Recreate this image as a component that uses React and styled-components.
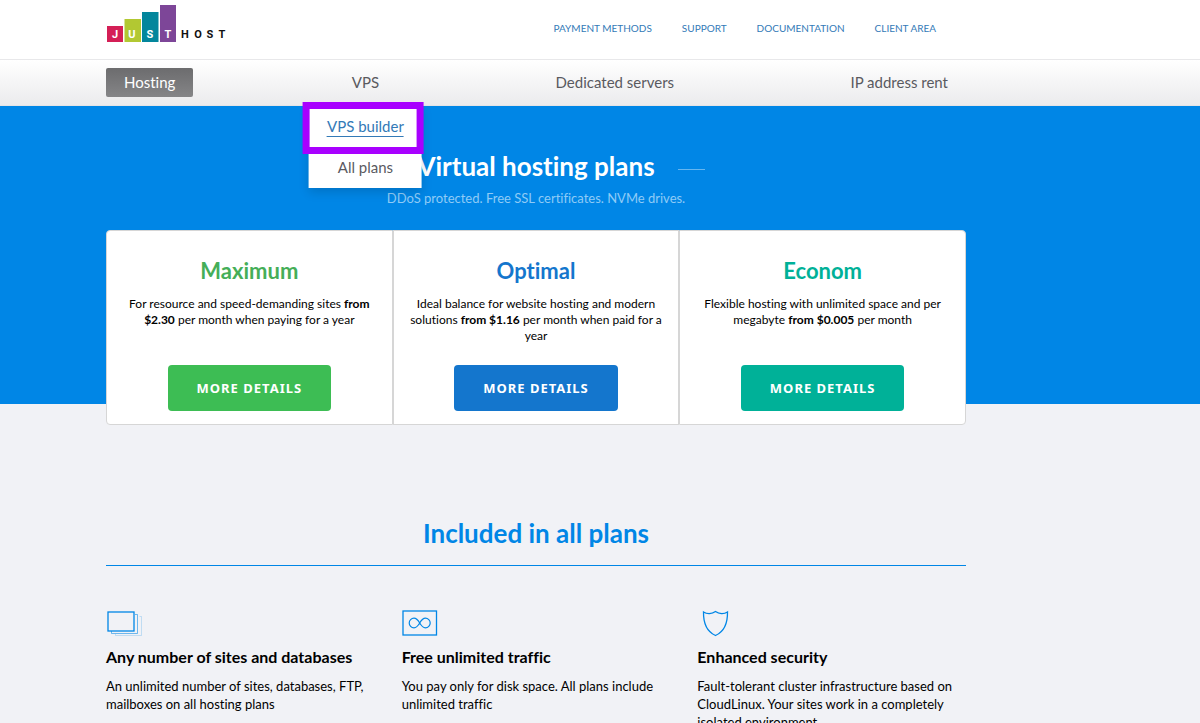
import React from "react";
import styled, { createGlobalStyle } from "styled-components";

const GlobalStyle = createGlobalStyle`
  *, *::before, *::after { box-sizing: border-box; }
  html { overflow-x: hidden; scrollbar-width: none; }
  body {
    margin: 0;
    background: #f1f2f6;
    color: #000;
    font-family: Lato, "Liberation Sans", sans-serif;
    font-size: 13px;
    line-height: 16px;
    font-variant-ligatures: none;
  }
  h1, h2, h3, p, ul { margin: 0; padding: 0; }
  ul { list-style: none; }
  a { text-decoration: none; }
`;

const Container = styled.div`
  max-width: 966px;
  padding-left: 106px;
`;

const Header = styled.header`
  background: #fff;
  border-bottom: 1px solid #e8e8ea;
`;

const HeaderRow = styled(Container)`
  display: flex;
  justify-content: space-between;
  align-items: flex-start;
  height: 59px;
  padding-right: 30px;
`;

const LogoLink = styled.a`
  display: block;
  padding-top: 4px;
`;

const LogoSvg = styled.svg`
  display: block;
  font-family: Roboto, sans-serif;
  font-size: 11px;
  font-weight: 700;
  text-anchor: middle;
`;

const TopLinks = styled.nav`
  display: flex;
  gap: 30px;
  padding-top: 20px;
`;

const TopLink = styled.a`
  color: #337ab7;
  font-size: 10px;
  text-transform: uppercase;
`;

const MainNav = styled.nav`
  background: linear-gradient(#fff, #ebebed);
  border-bottom: 1px solid #e4e4e6;
`;

const NavList = styled.ul`
  display: flex;
  justify-content: space-between;
  padding: 8px 0;
`;

const NavItem = styled.li`
  position: relative;
`;

const NavLink = styled.a`
  display: block;
  padding: 0 18px;
  border-radius: 2px;
  color: ${(p) => (p.$active ? "#fff" : "#5a5a5f")};
  background: ${(p) => (p.$active ? "linear-gradient(#6c6c6e, #858587)" : "none")};
  font-size: 15px;
  line-height: 29px;
`;

const Menu = styled.ul`
  position: absolute;
  z-index: 2;
  top: 38px;
  left: 50%;
  transform: translateX(-50%);
  background: #fff;
  box-shadow: 0 4px 10px rgba(0, 0, 0, 0.15);
  text-align: center;
  white-space: nowrap;
`;

const MenuItem = styled.li`
  position: relative;
  padding: 10px 18px;
`;

const MenuLink = styled.a`
  display: inline-block;
  color: ${(p) => (p.$hovered ? "#337ab7" : "#5a5a5f")};
  border-bottom: 1px solid ${(p) => (p.$hovered ? "#337ab7" : "transparent")};
  font-size: 15px;
  line-height: 20px;
`;

const Highlight = styled.span`
  position: absolute;
  inset: -4px -2px -7px -6px;
  border: 7px solid #a800ff;
  pointer-events: none;
`;

const Hero = styled.section`
  background: linear-gradient(#0086e6, #0086e6) top / 100% 298px no-repeat;
  text-align: center;
`;

const HeroTitle = styled.h1`
  display: flex;
  align-items: center;
  justify-content: center;
  gap: 23px;
  padding-top: 44px;
  color: #fff;
  font-size: 26px;
  line-height: 32px;

  &::before, &::after {
    content: "";
    width: 27px;
    height: 1px;
    margin-top: 6px;
    background: #66b6f0;
  }
`;

const HeroText = styled.p`
  padding: 8px 0 24px;
  color: #8fcbf6;
  font-size: 13px;
`;

const Plans = styled.div`
  display: grid;
  grid-template-columns: repeat(3, 1fr);
`;

const Plan = styled.article`
  display: flex;
  flex-direction: column;
  align-items: center;
  padding: 27px 16px 13px;
  background: #fff;
  border: 1px solid #d6d6d6;

  &:first-child { border-radius: 4px 0 0 4px; }
  &:last-child { border-radius: 0 4px 4px 0; }
`;

const PlanTitle = styled.h2`
  color: ${(p) => p.$color};
  font-size: 22px;
  line-height: 26px;
`;

const PlanText = styled.p`
  min-height: 48px;
  margin: 12px 0 21px;
  font-size: 12px;
`;

const PlanButton = styled.button`
  padding: 0 29px;
  border: 0;
  border-radius: 4px;
  background: ${(p) => p.$color};
  color: #fff;
  font-family: "Noto Sans", sans-serif;
  font-size: 13px;
  font-weight: 700;
  line-height: 46px;
  letter-spacing: 1px;
  text-transform: uppercase;
  cursor: pointer;
`;

const SectionTitle = styled.h2`
  margin-top: 92px;
  padding-bottom: 16px;
  border-bottom: 1px solid #0086e6;
  color: #0086e6;
  font-size: 26px;
  line-height: 32px;
  text-align: center;
`;

const Features = styled.div`
  display: grid;
  grid-template-columns: repeat(3, 1fr);
  gap: 27px;
  padding: 43px 0 40px;
`;

const Feature = styled.article`
  svg { display: block; }
`;

const FeatureTitle = styled.h3`
  margin: 10px 0;
  font-size: 16px;
  line-height: 20px;
`;

const FeatureText = styled.p`
  font-size: 13px;
  line-height: 18px;
`;

const Logo = () => (
  <LogoSvg width="122" height="40" viewBox="0 0 122 40" role="img" aria-label="Just Host">
    <rect x="1" y="22" width="16" height="16" fill="#d41f56" />
    <rect x="18.500" y="15" width="16.500" height="23" fill="#b2c832" />
    <rect x="36" y="8" width="16.500" height="30" fill="#03869c" />
    <rect x="54" y="1" width="16" height="37" fill="#7d4698" />
    <g fill="#fff">
      <text x="9" y="34">J</text>
      <text x="26" y="34">U</text>
      <text x="44" y="34">S</text>
      <text x="62" y="34">T</text>
    </g>
    <g fill="#111">
      <text x="79" y="34">H</text>
      <text x="92" y="34">O</text>
      <text x="104" y="34">S</text>
      <text x="116" y="34">T</text>
    </g>
  </LogoSvg>
);

const icons = {
  sites: (
    <>
      <path d="M9.5 25v1.5h26v-19h-2" opacity=".2" />
      <path d="M5.500 22v2.500h26v-19h-2.500" opacity=".55" />
      <rect x="2" y="3" width="26" height="19" strokeWidth="1.300" />
    </>
  ),
  traffic: (
    <>
      <rect x="1" y="2" width="33.500" height="24" strokeWidth="1.300" />
      <path d="M17.700 14C15.800 10.800 14.500 9.200 12 9.200a4.800 4.800 0 0 0 0 9.600c2.500 0 3.800-1.600 5.700-4.800s3.200-4.800 5.700-4.800a4.800 4.800 0 0 1 0 9.600c-2.500 0-3.800-1.600-5.700-4.800Z" strokeWidth="1.200" />
    </>
  ),
  security: (
    <path d="M6.500 3c3.500 2.200 8.500 2 12-.5 3.500 2.500 8.500 2.700 12 .5.200 12-3 19.500-12 23.500C9.500 22.500 6.300 15 6.500 3Z" strokeWidth="1.300" />
  ),
};

const FeatureIcon = ({ name }) => (
  <svg width="38" height="28" viewBox="0 0 38 28" fill="none" stroke="#0086e6" aria-hidden="true">
    {icons[name]}
  </svg>
);

const plans = [
  { name: "Maximum", title: "#45ae58", color: "#3dbd54", text: <>For resource and speed-demanding sites <b>from $2.30</b> per month when paying for a year</> },
  { name: "Optimal", title: "#1476cd", color: "#1476cd", text: <>Ideal balance for website hosting and modern solutions <b>from $1.16</b> per month when paid for a year</> },
  { name: "Econom", title: "#00b198", color: "#00b198", text: <>Flexible hosting with unlimited space and per megabyte <b>from $0.005</b> per month</> },
];

const features = [
  { icon: "sites", title: "Any number of sites and databases", text: "An unlimited number of sites, databases, FTP, mailboxes on all hosting plans" },
  { icon: "traffic", title: "Free unlimited traffic", text: "You pay only for disk space. All plans include unlimited traffic" },
  { icon: "security", title: "Enhanced security", text: "Fault-tolerant cluster infrastructure based on CloudLinux. Your sites work in a completely isolated environment" },
];

export default function App() {
  return (
    <>
      <GlobalStyle />
      <Header>
        <HeaderRow>
          <LogoLink href="#"><Logo /></LogoLink>
          <TopLinks>
            {["Payment methods", "Support", "Documentation", "Client area"].map((t) => (
              <TopLink key={t} href="#">{t}</TopLink>
            ))}
          </TopLinks>
        </HeaderRow>
      </Header>
      <MainNav>
        <Container>
          <NavList>
            <NavItem><NavLink href="#" $active>Hosting</NavLink></NavItem>
            <NavItem>
              <NavLink href="#">VPS</NavLink>
              <Menu>
                <MenuItem>
                  <MenuLink href="#" $hovered>VPS builder</MenuLink>
                  <Highlight />
                </MenuItem>
                <MenuItem><MenuLink href="#">All plans</MenuLink></MenuItem>
              </Menu>
            </NavItem>
            <NavItem><NavLink href="#">Dedicated servers</NavLink></NavItem>
            <NavItem><NavLink href="#">IP address rent</NavLink></NavItem>
          </NavList>
        </Container>
      </MainNav>
      <main>
        <Hero>
          <Container>
            <HeroTitle>Virtual hosting plans</HeroTitle>
            <HeroText>DDoS protected. Free SSL certificates. NVMe drives.</HeroText>
            <Plans>
              {plans.map((p) => (
                <Plan key={p.name}>
                  <PlanTitle $color={p.title}>{p.name}</PlanTitle>
                  <PlanText>{p.text}</PlanText>
                  <PlanButton type="button" $color={p.color}>More details</PlanButton>
                </Plan>
              ))}
            </Plans>
          </Container>
        </Hero>
        <Container as="section">
          <SectionTitle>Included in all plans</SectionTitle>
          <Features>
            {features.map((f) => (
              <Feature key={f.title}>
                <FeatureIcon name={f.icon} />
                <FeatureTitle>{f.title}</FeatureTitle>
                <FeatureText>{f.text}</FeatureText>
              </Feature>
            ))}
          </Features>
        </Container>
      </main>
    </>
  );
}
